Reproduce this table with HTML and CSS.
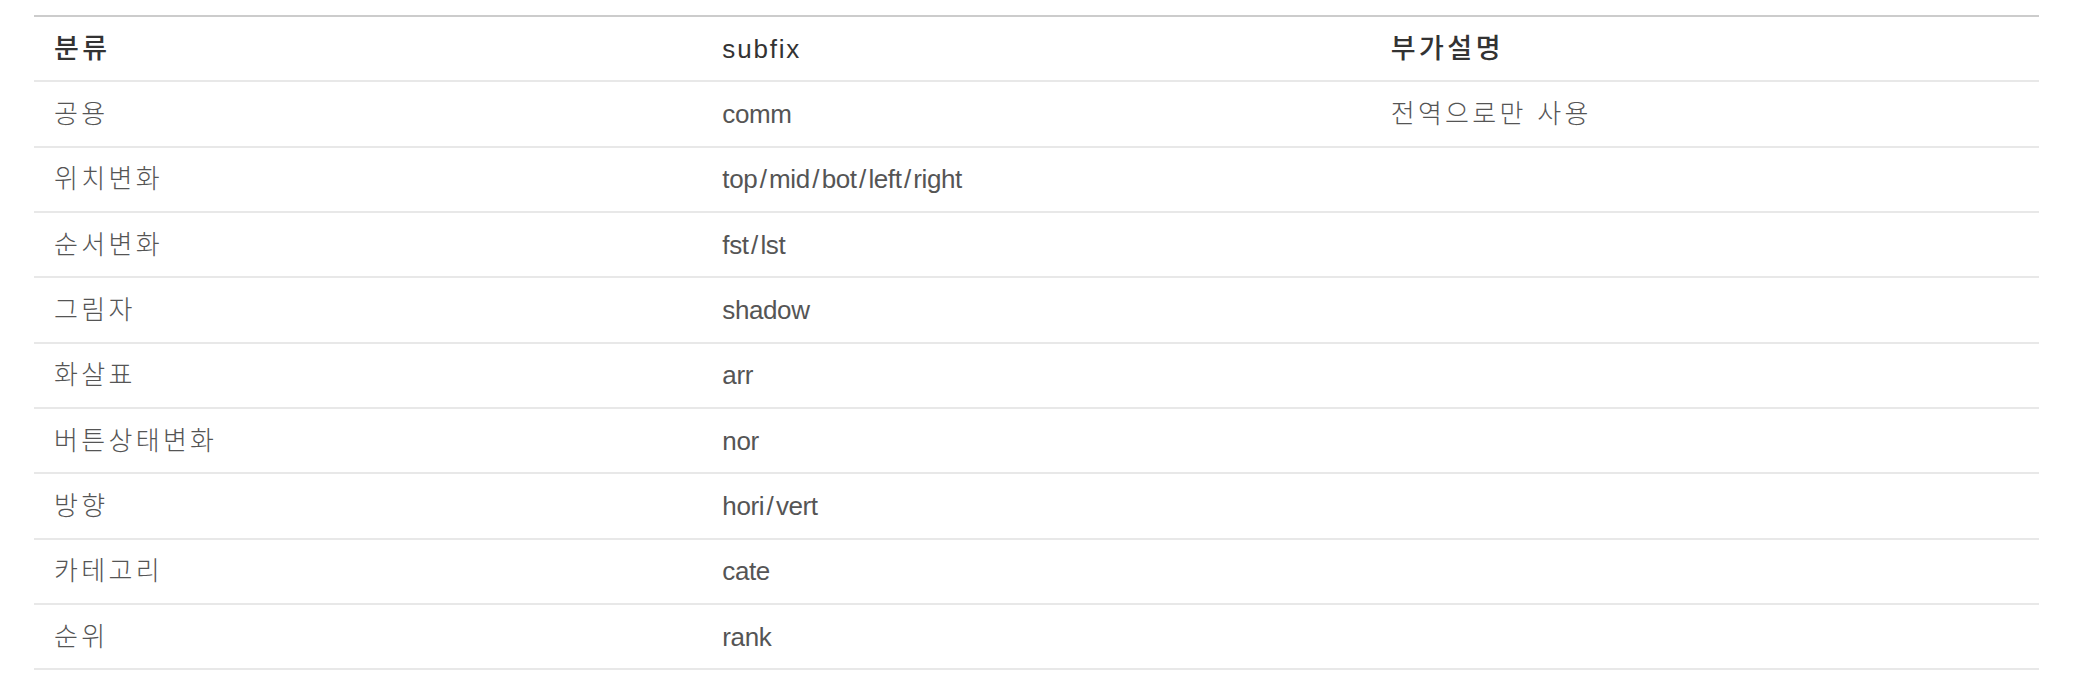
FILE: index.html
```html
<!DOCTYPE html>
<html lang="ko">
<head>
<meta charset="utf-8">
<title>subfix</title>
<link rel="stylesheet" href="styles.css">
</head>
<body>
<div class="wrap">
  <table class="tbl">
    <colgroup><col class="c"><col class="c"><col class="c"></colgroup>
    <thead>
      <tr><th class="ko">분류</th><th class="en">subfix</th><th class="ko">부가설명</th></tr>
    </thead>
    <tbody>
      <tr><td class="ko">공용</td><td class="en">comm</td><td class="ko">전역으로만 사용</td></tr>
      <tr><td class="ko">위치변화</td><td class="en">top<span class="sl">/</span>mid<span class="sl">/</span>bot<span class="sl">/</span>left<span class="sl">/</span>right</td><td></td></tr>
      <tr><td class="ko">순서변화</td><td class="en">fst<span class="sl">/</span>lst</td><td></td></tr>
      <tr><td class="ko">그림자</td><td class="en">shadow</td><td></td></tr>
      <tr><td class="ko">화살표</td><td class="en">arr</td><td></td></tr>
      <tr><td class="ko">버튼상태변화</td><td class="en">nor</td><td></td></tr>
      <tr><td class="ko">방향</td><td class="en">hori<span class="sl">/</span>vert</td><td></td></tr>
      <tr><td class="ko">카테고리</td><td class="en">cate</td><td></td></tr>
      <tr><td class="ko">순위</td><td class="en">rank</td><td></td></tr>
    </tbody>
  </table>
</div>
</body>
</html>
```

FILE: styles.css
```css
html, body {
  margin: 0;
  padding: 0;
  background: #fff;
}
.wrap {
  padding: 15px 41px 0 34px;
}
.tbl {
  width: 100%;
  border-collapse: collapse;
  table-layout: fixed;
  border-top: 2px solid #cccccc;
  font-family: "Liberation Sans", "Noto Sans CJK KR", sans-serif;
  font-size: 26px;
}
.tbl .c {
  width: 33.333%;
}
.tbl th,
.tbl td {
  height: 63.33px;
  padding: 0 20px;
  text-align: left;
  vertical-align: middle;
  border-bottom: 2px solid #e8e8e8;
  line-height: 30px;
  white-space: nowrap;
}
.tbl th {
  font-weight: 500;
  color: #333;
}
.tbl th.ko {
  font-size: 27px;
  letter-spacing: 3.5px;
}
.tbl th.en {
  letter-spacing: 1.8px;
}
.tbl td {
  font-weight: 400;
  color: #555;
}
.tbl td.ko {
  font-weight: 300;
  letter-spacing: 3.3px;
}
.tbl td.en {
  letter-spacing: -0.4px;
}
.tbl .sl {
  padding: 0 2.5px;
}
```
